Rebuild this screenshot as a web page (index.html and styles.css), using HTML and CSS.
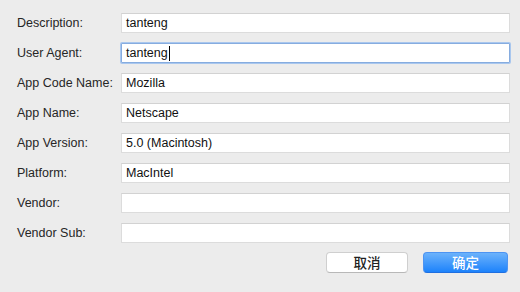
FILE: index.html
```html
<!DOCTYPE html>
<html>
<head>
<meta charset="utf-8">
<title>Navigator</title>
<link rel="stylesheet" href="styles.css">
</head>
<body>
<div class="dialog">
  <div class="form">
    <label class="label">Description:</label>
    <div class="field">tanteng</div>
    <label class="label">User Agent:</label>
    <div class="field focus">tanteng<span class="caret"></span></div>
    <label class="label">App Code Name:</label>
    <div class="field">Mozilla</div>
    <label class="label">App Name:</label>
    <div class="field">Netscape</div>
    <label class="label">App Version:</label>
    <div class="field">5.0 (Macintosh)</div>
    <label class="label">Platform:</label>
    <div class="field">MacIntel</div>
    <label class="label">Vendor:</label>
    <div class="field"></div>
    <label class="label">Vendor Sub:</label>
    <div class="field"></div>
  </div>
  <div class="buttons">
    <button class="btn">取消</button>
    <button class="btn primary">确定</button>
  </div>
</div>
</body>
</html>
```

FILE: styles.css
```css
/* Preferences dialog */

html, body
{ margin: 0;
  background-color: #ececec;
}

.dialog
{ width: 520px;
  height: 292px;
  box-sizing: border-box;
  padding: 13px 10px 0 17px;
  font-family: "Liberation Sans", Arial, sans-serif;
  font-size: 12.5px;
  color: #262626;
}

.form
{ display: grid;
  grid-template-columns: 104px 1fr;
  grid-auto-rows: 20px;
  row-gap: 10px;
  align-items: center;
}

.label
{ line-height: 20px;
  margin-top: -1px;
}

.field
{ height: 20px;
  box-sizing: border-box;
  padding: 0 4px;
  line-height: 18px;
  background-color: #fff;
  border: 1px solid #dcdcdc;
  border-top-color: #d2d2d2;
  color: #111;
  display: flex;
  align-items: center;
}

.field.focus
{ border-color: #86acdf;
  box-shadow: 0 0 0 1px #a9c7ee;
  border-radius: 1px;
}

.caret
{ display: inline-block;
  width: 1px;
  height: 15px;
  background-color: #000;
  margin-left: 1px;
}

.buttons
{ display: flex;
  justify-content: flex-end;
  gap: 15px;
  margin-top: 9px;
  padding-right: 2px;
}

.btn
{ height: 21px;
  width: 82px;
  padding: 0;
  border: 1px solid #cfcfcf;
  border-bottom-color: #b8b8b8;
  border-radius: 4px;
  background-color: #fff;
  font-family: "Noto Sans CJK SC", sans-serif;
  font-size: 13.5px;
  line-height: 19px;
  color: #222;
  font-weight: 500;
}

.btn.primary
{ width: 85px;
  border-color: #4d94f2;
  border-bottom-color: #1f6fe0;
  background: linear-gradient(#6cb2fb, #1d83fb);
  color: #fff;
}
```
